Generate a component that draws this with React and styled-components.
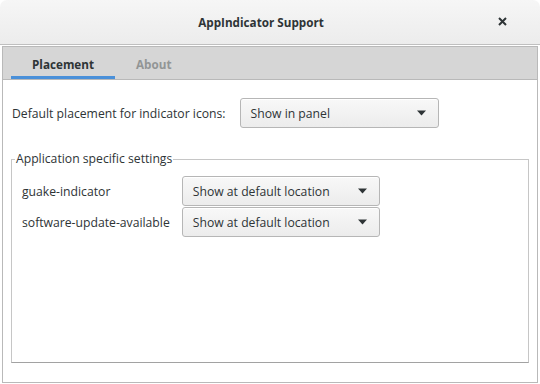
import React, { useState } from "react";
import styled, { createGlobalStyle } from "styled-components";

const GlobalStyle = createGlobalStyle`
  html, body {
    margin: 0;
    padding: 0;
    background: #ffffff;
  }
  body {
    font-family: "Open Sans", "DejaVu Sans", sans-serif;
    font-size: 12.2px;
    color: #2e3436;
  }
`;

const Window = styled.div`
  width: 540px;
  height: 384px;
  display: flex;
  flex-direction: column;
  background: #ffffff;
  border-radius: 7px 7px 0 0;
  overflow: hidden;
  box-sizing: border-box;
`;

const TitleBar = styled.header`
  height: 45px;
  flex-shrink: 0;
  display: flex;
  align-items: center;
  padding: 0 9px 0 51px;
  background: linear-gradient(#f6f6f6, #ececec);
  border-bottom: 1px solid #bfbfbf;
  box-sizing: border-box;
`;

const Title = styled.h1`
  flex: 1;
  margin: 0;
  text-align: center;
  font-size: 11.7px;
  font-weight: 700;
  color: #2e3436;
`;

const CloseButton = styled.button`
  width: 60px;
  height: 44px;
  border: none;
  background: transparent;
  display: flex;
  align-items: center;
  justify-content: center;
  padding: 0 0 2px 2px;
  color: #2e3436;
  cursor: pointer;
`;

const Body = styled.div`
  flex: 1;
  display: flex;
  padding: 1px 2px 1px 2px;
  background: #ffffff;
`;

const Notebook = styled.div`
  flex: 1;
  display: flex;
  flex-direction: column;
  border: 1px solid #b9b9b9;
`;

const TabBar = styled.div`
  height: 33px;
  display: flex;
  padding-left: 8px;
  background: #d6d6d6;
  border-bottom: 1px solid #b9b9b9;
  box-sizing: border-box;
`;

const Tab = styled.button`
  padding: 4px 21px 0;
  border: none;
  border-bottom: 3px solid ${(p) => (p.active ? "#4a90d9" : "transparent")};
  background: transparent;
  font-family: inherit;
  font-size: 11.7px;
  font-weight: 700;
  color: ${(p) => (p.active ? "#2e3436" : "#929595")};
  cursor: pointer;
`;

const Page = styled.div`
  flex: 1;
  display: flex;
  flex-direction: column;
  padding: 18px 8px 19px 8px;
  background: #ffffff;
`;

const DefaultRow = styled.div`
  display: flex;
  align-items: center;
  gap: 14px;
  padding-left: 1px;
  margin-bottom: 23px;
`;

const Label = styled.span`
  white-space: nowrap;
`;

const Combo = styled.button`
  width: ${(p) => p.width}px;
  height: 30px;
  display: flex;
  align-items: center;
  justify-content: space-between;
  padding: 0 12px 0 10px;
  border: 1px solid #b6b6b6;
  border-radius: 3px;
  background: linear-gradient(#f8f8f8, #ececec);
  box-shadow: inset 0 1px #ffffff;
  font-family: inherit;
  font-size: 12.2px;
  color: #2e3436;
  box-sizing: border-box;
  cursor: pointer;
`;

const Arrow = () => (
  <svg width="9" height="6" viewBox="0 0 9 6">
    <path d="M0 0.5h9L4.5 5.5z" fill="#2e3436" />
  </svg>
);

const Frame = styled.fieldset`
  flex: 1;
  margin: 0;
  padding: 0;
  border: 1px solid #c6c6c6;
  border-bottom-color: #a2a2a2;
  min-width: 0;
`;

const Legend = styled.legend`
  padding: 0 1px;
  margin-left: 3px;
  font-size: 12.2px;
  line-height: 16px;
`;

const AppGrid = styled.div`
  display: grid;
  grid-template-columns: auto auto;
  justify-content: start;
  align-items: center;
  column-gap: 12px;
  row-gap: 1px;
  padding: 9px 10px 0 10px;
`;

const apps = ["guake-indicator", "software-update-available"];

export default function App() {
  const [tab, setTab] = useState("placement");

  return (
    <>
      <GlobalStyle />
      <Window>
        <TitleBar>
          <Title>AppIndicator Support</Title>
          <CloseButton aria-label="Close">
            <svg width="9" height="9" viewBox="0 0 9 9">
              <path d="M1 1l7 7M8 1l-7 7" stroke="#2e3436" strokeWidth="2" />
            </svg>
          </CloseButton>
        </TitleBar>
        <Body>
          <Notebook>
            <TabBar>
              <Tab active={tab === "placement"} onClick={() => setTab("placement")}>
                Placement
              </Tab>
              <Tab active={tab === "about"} onClick={() => setTab("about")}>
                About
              </Tab>
            </TabBar>
            <Page>
              <DefaultRow>
                <Label>Default placement for indicator icons:</Label>
                <Combo width={199}>
                  <span>Show in panel</span>
                  <Arrow />
                </Combo>
              </DefaultRow>
              <Frame>
                <Legend>Application specific settings</Legend>
                <AppGrid>
                  {apps.map((name) => (
                    <React.Fragment key={name}>
                      <Label>{name}</Label>
                      <Combo width={198}>
                        <span>Show at default location</span>
                        <Arrow />
                      </Combo>
                    </React.Fragment>
                  ))}
                </AppGrid>
              </Frame>
            </Page>
          </Notebook>
        </Body>
      </Window>
    </>
  );
}
